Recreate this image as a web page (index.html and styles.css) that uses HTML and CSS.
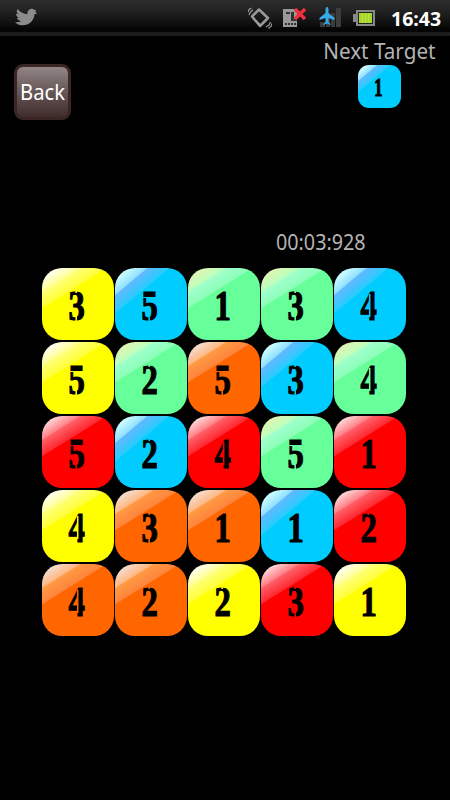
FILE: index.html
```html
<!DOCTYPE html>
<html lang="en">

<head>
    <meta charset="UTF-8">
    <meta name="viewport" content="width=device-width, initial-scale=1.0">
    <title>Next Target</title>
    <link rel="stylesheet" href="styles.css">
</head>

<body>
    <div class="statusbar">
        <svg class="bird" width="24" height="20" viewBox="0 0 24 20">
            <path fill="#8b8b8b" d="M1 14c3 .5 5-.2 6-1C4 12.700 3 11 3 10l2 0C2.500 9 2 7 2.300 5.500l2 .7C2.500 4.500 2.500 2.500 3.500 1c3 3.500 6 5 10 5.200C13 2.500 16 .5 18.500.8l2 1.200 1.800-.3-1 2 1.700 1.800-2.500.8C20 14 13 19 5 16.800 3 16 1.800 15 1 14z" />
        </svg>
        <div class="icons">
            <svg width="24" height="22" viewBox="0 0 24 22">
                <g fill="none" stroke="#999">
                    <path stroke-width="2.500" stroke-linejoin="round" d="M11 2.500L20 11l-8 8L4 9.500z" />
                    <path stroke-width="1" d="M8 13l4 4" />
                    <path stroke-width="1.200" d="M1 8l1.500-3L5 3M0 5l1-2.500L3.500 1M18 20l3-2 1.500-3M20.500 21.500l2.500-2 1-3" />
                </g>
            </svg>
            <svg width="26" height="22" viewBox="0 0 26 22">
                <path fill="#999" d="M1 2h14v18H1z" />
                <path fill="#333" d="M4 5h4v2H4zM9 5h3v7H9zM3 16h2v2H3zM6 16h2v2H6zM9 16h2v2H9zM12 16h2v2h-2zM9 12h6v2H9z" />
                <path stroke="#f0303c" stroke-width="3.500" d="M13 2l10 10M23 2L13 12" />
            </svg>
            <svg width="25" height="22" viewBox="0 0 25 22">
                <path fill="#3c3c3c" d="M2 15h5v5H2zM8 11h4v9H8zM13 6h4v14h-4zM18 1h5v19h-5z" />
                <path fill="#38a9e8" d="M9 0c1 0 1.500 1 1.500 3v3l6 5v2l-6-2v4l2 2v1L9 16.500 5.500 18v-1l2-2v-4l-6 2v-2l6-5V3C7.500 1 8 0 9 0z" />
            </svg>
            <svg width="23" height="18" viewBox="0 0 23 18">
                <path fill="#888" d="M0 5h3V1h19v16H3v-4H0z" />
                <path fill="#222" d="M5 3h15v12H5z" />
                <path fill="#a5d62a" d="M6 4h13v10H6z" />
                <path stroke="#b9e346" d="M9.500 4v10M12.500 4v10M15.500 4v10" />
            </svg>
        </div>
        <span class="clock">16:43</span>
    </div>

    <div class="header">
        <button class="back"><span>Back</span></button>
        <div class="next">
            <div class="label">Next Target</div>
            <div class="tile small blue n1"><span>1</span></div>
        </div>
    </div>

    <div class="timer">00:03:928</div>

    <div class="board">
        <div class="tile yellow n3"><span>3</span></div>
        <div class="tile blue n5"><span>5</span></div>
        <div class="tile green n1"><span>1</span></div>
        <div class="tile green n3"><span>3</span></div>
        <div class="tile blue n4"><span>4</span></div>

        <div class="tile yellow n5"><span>5</span></div>
        <div class="tile green n2"><span>2</span></div>
        <div class="tile orange n5"><span>5</span></div>
        <div class="tile blue n3"><span>3</span></div>
        <div class="tile green n4"><span>4</span></div>

        <div class="tile red n5"><span>5</span></div>
        <div class="tile blue n2"><span>2</span></div>
        <div class="tile red n4"><span>4</span></div>
        <div class="tile green n5"><span>5</span></div>
        <div class="tile red n1"><span>1</span></div>

        <div class="tile yellow n4"><span>4</span></div>
        <div class="tile orange n3"><span>3</span></div>
        <div class="tile orange n1"><span>1</span></div>
        <div class="tile blue n1"><span>1</span></div>
        <div class="tile red n2"><span>2</span></div>

        <div class="tile orange n4"><span>4</span></div>
        <div class="tile orange n2"><span>2</span></div>
        <div class="tile yellow n2"><span>2</span></div>
        <div class="tile red n3"><span>3</span></div>
        <div class="tile yellow n1"><span>1</span></div>
    </div>
</body>

</html>
```
FILE: styles.css
```css
* {
    padding: 0;
    margin: 0;
    box-sizing: border-box;
}

body {
    width: 450px;
    height: 800px;
    background: #000;
    color: #b4b4b4;
    font-family: "Noto Sans", "Open Sans", sans-serif;
    overflow: hidden;
}

svg {
    display: block;
}

.statusbar {
    display: flex;
    align-items: center;
    height: 36px;
    padding: 0 8px 0 14px;
    background: linear-gradient(#2d2d2d 0, #202020 35%, #050505 82%, #050505 88%, #202020 91%, #1c1c1c 100%);
}

.icons {
    display: flex;
    align-items: center;
    gap: 10px;
    margin-left: auto;
}

.clock {
    width: 51px;
    margin: 0 0 0 15px;
    color: #fff;
    font-size: 19.500px;
    font-weight: bold;
    white-space: nowrap;
}

.header {
    display: flex;
    justify-content: space-between;
    height: 192px;
    padding: 0 14px;
}

.back {
    width: 57px;
    height: 56px;
    margin-top: 28px;
    border: 3px solid #3a2725;
    border-radius: 9px;
    background: linear-gradient(#918585, #6b5b5b 45%, #3f2c2b);
    color: #fff;
    font: 22px "Noto Sans", "Open Sans", sans-serif;
}

.back span {
    display: block;
    margin: -2px -5px 0;
    transform: scaleX(.92);
}

.next {
    display: flex;
    flex-direction: column;
    align-items: flex-end;
}

.label {
    height: 29px;
    font-size: 22px;
    line-height: 29px;
    white-space: nowrap;
    transform: scaleX(.94);
    transform-origin: right;
}

.timer {
    height: 28px;
    padding-left: 276px;
    font-size: 21px;
    line-height: 28px;
    transform: scaleX(.94);
    transform-origin: 276px 0;
}

.board {
    display: grid;
    grid-template-columns: repeat(5, 72px);
    grid-auto-rows: 72px;
    gap: 2px 1px;
    margin: 12px 0 0 42px;
}

.tile {
    --angle: 148deg;
    position: relative;
    display: flex;
    align-items: center;
    justify-content: center;
    border-radius: 20px;
    color: #000;
    font: bold 43px/1 "Liberation Serif", serif;
    background: linear-gradient(var(--angle), var(--a) 8%, var(--b) 20%, var(--c) 21%, var(--d) 34%, var(--e) 35%);
}

.tile span {
    position: relative;
    transform: translate(-1px, 1px) scaleX(.76);
    -webkit-text-stroke: 1.200px #000;
}

/* stencil cuts */
.tile span::before,
.tile span::after {
    position: absolute;
    background: var(--e);
}

.n3 span::before,
.n2 span::before {
    content: "";
    left: 9px;
    top: 4px;
    width: 1.500px;
    height: 5px;
}

.n3 span::after,
.n5 span::after {
    content: "";
    left: 9px;
    bottom: 5px;
    width: 1.500px;
    height: 6px;
}

.n4 span::before {
    content: "";
    left: 11px;
    top: 10px;
    width: 1.500px;
    height: 23px;
}

.n5 span::before {
    content: "";
    left: 2px;
    top: 13px;
    width: 18px;
    height: 1px;
}

.yellow {
    --a: #fffff0;
    --b: #ffff98;
    --c: #ffff78;
    --d: #ffff38;
    --e: #ffff00;
}

.blue {
    --angle: 140deg;
    --a: #d0ffff;
    --b: #90e0ff;
    --c: #62b8ff;
    --d: #28ccff;
    --e: #00ccff;
}

.green {
    --a: #e0f4b4;
    --b: #bcffbc;
    --c: #a0ffcc;
    --d: #8cffb8;
    --e: #66ff99;
}

.orange {
    --a: #f4dccc;
    --b: #ffb884;
    --c: #ff9a44;
    --d: #ff843c;
    --e: #ff6600;
}

.red {
    --a: #ffd4d4;
    --b: #ff8088;
    --c: #ff6068;
    --d: #ff2830;
    --e: #ff0000;
}

.small {
    width: 43px;
    height: 43px;
    margin-right: 35px;
    border-radius: 11px;
    font-size: 25px;
}

.small span {
    transform: translate(-1px, 1px) scaleX(.66);
}
```
